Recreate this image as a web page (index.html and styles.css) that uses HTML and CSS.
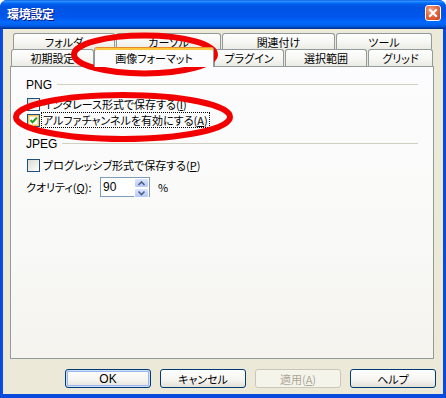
FILE: index.html
```html
<!DOCTYPE html>
<html lang="ja">
<head>
<meta charset="utf-8">
<title>環境設定</title>
<link rel="stylesheet" href="styles.css">
</head>
<body>
<div class="window">
  <div class="titlebar">
    <span class="title">環境設定</span>
    <span class="close">
      <svg viewBox="0 0 16 16" width="16" height="16"><path d="M5 5 L11 11 M11 5 L5 11" stroke="#fff" stroke-width="2.2" stroke-linecap="square" fill="none"/></svg>
    </span>
  </div>
  <div class="client">
    <div class="tabs">
      <div class="tabrow back">
        <div class="tab t-folder">フォルダ</div>
        <div class="tab t-cursor">カーソル</div>
        <div class="tab t-assoc">関連付け</div>
        <div class="tab t-tool">ツール</div>
      </div>
      <div class="tabrow front">
        <div class="tab t-init">初期設定</div>
        <div class="tab t-image selected">画像フォーマット</div>
        <div class="tab t-plugin">プラグイン</div>
        <div class="tab t-select">選択範囲</div>
        <div class="tab t-grid">グリッド</div>
      </div>
    </div>
    <div class="panel">
      <div class="group png">
        <span class="group-label latin">PNG</span>
        <span class="group-line"></span>
      </div>
      <div class="check-row first">
        <span class="box"></span>
        <span class="label">インタレース形式で保存する(<u>I</u>)</span>
      </div>
      <div class="check-row">
        <span class="box hot">
          <svg viewBox="0 0 11 11" width="11" height="11"><path d="M2.5 5 L4.5 7.2 L8.8 2.8" stroke="#21A121" stroke-width="2" fill="none"/></svg>
        </span>
        <span class="label focus">アルファチャンネルを有効にする(<u>A</u>)</span>
      </div>
      <div class="group jpeg">
        <span class="group-label latin">JPEG</span>
        <span class="group-line"></span>
      </div>
      <div class="check-row progressive">
        <span class="box"></span>
        <span class="label">プログレッシブ形式で保存する(<u>P</u>)</span>
      </div>
      <div class="quality-row">
        <span class="quality-label">クオリティ(<u>Q</u>):</span>
        <div class="spin">
          <span class="spin-value latin">90</span>
          <div class="spin-btns">
            <span class="spin-btn">
              <svg viewBox="0 0 13 8" width="13" height="8"><path d="M3.5 6 L6.5 3 L9.5 6" stroke="#4D6185" stroke-width="1.6" fill="none"/></svg>
            </span>
            <span class="spin-btn">
              <svg viewBox="0 0 13 8" width="13" height="8"><path d="M3.5 2.5 L6.5 5.5 L9.5 2.5" stroke="#4D6185" stroke-width="1.6" fill="none"/></svg>
            </span>
          </div>
        </div>
        <span class="pct">%</span>
      </div>
    </div>
    <div class="buttons">
      <span class="btn default latin">OK</span>
      <span class="btn">キャンセル</span>
      <span class="btn disabled">適用(<u>A</u>)</span>
      <span class="btn">ヘルプ</span>
    </div>
  </div>
  <svg class="marks" viewBox="0 0 446 398" width="446" height="398">
    <ellipse cx="144.5" cy="54.5" rx="70.5" ry="19" fill="none" stroke="#F20000" stroke-width="6"/>
    <ellipse cx="123" cy="117" rx="107" ry="22" fill="none" stroke="#F20000" stroke-width="6"/>
  </svg>
</div>
</body>
</html>
```

FILE: styles.css
```css
* { box-sizing: border-box; }

html, body {
  margin: 0;
  padding: 0;
  background: #ffffff;
}

body {
  font-family: "Noto Sans CJK JP", "Noto Sans", sans-serif;
  font-size: 11px;
  font-feature-settings: "palt";
  color: #000;
}

.latin {
  font-family: "Liberation Sans", "DejaVu Sans", sans-serif;
  font-size: 12px;
  font-feature-settings: normal;
}

.window {
  position: relative;
  width: 446px;
  height: 398px;
  display: flex;
  flex-direction: column;
  border-radius: 7px 7px 0 0;
  overflow: hidden;
  background: linear-gradient(to right, #0A3CD6 0, #0C52E6 1px, #0A4BDE 3px);
}

.titlebar {
  flex: none;
  height: 29px;
  display: flex;
  align-items: center;
  justify-content: space-between;
  padding: 0 5px 1px 7px;
  background: linear-gradient(to bottom,
    #0058EE 0%, #3593FF 4%, #288EFF 6%, #127DFF 8%, #036FFC 10%,
    #0262EE 14%, #0057E5 20%, #0054E3 24%, #0055EB 56%, #005BF5 66%,
    #026AFE 76%, #0062EF 86%, #0052D6 92%, #0040AB 96%, #003092 100%);
}

.title {
  color: #fff;
  font-weight: bold;
  font-size: 12px;
  line-height: 16px;
  letter-spacing: -0.3px;
  text-shadow: 1px 1px 0 #0A1883;
}

.close {
  width: 16px;
  height: 16px;
  margin-top: -2px;
  border: 1px solid #fff;
  border-radius: 3px;
  background: radial-gradient(circle at 35% 30%, #F4A88C 0%, #E5683F 45%, #C8401E 100%);
  display: flex;
  align-items: center;
  justify-content: center;
}

.close svg {
  display: block;
  margin: -1px;
}

.client {
  flex: 1;
  margin: 0 3px 4px 3px;
  background: #ECE9D8;
  display: flex;
  flex-direction: column;
  padding: 4px 7px 0 7px;
}

.tabs {
  display: flex;
  flex-direction: column;
}

.tabrow {
  display: flex;
  gap: 1px;
}

.tabrow.back {
  height: 16px;
  padding-left: 3px;
}

.tabrow.front {
  height: 17px;
  padding-left: 1px;
}

.tab {
  height: 100%;
  border: 1px solid #919B9C;
  border-bottom: none;
  border-radius: 3px 3px 0 0;
  background: linear-gradient(to bottom, #FEFEFE 0%, #F7F7F4 50%, #ECEBE5 100%);
  display: flex;
  align-items: center;
  justify-content: center;
  line-height: 14px;
  white-space: nowrap;
}

.t-folder { width: 102px; }
.t-cursor { width: 105px; }
.t-assoc  { width: 113px; }
.t-tool   { width: 96px; }

.t-init   { width: 83px; }
.t-image  { width: 118px; }
.t-plugin { width: 70px; }
.t-select { width: 82px; }
.t-grid   { width: 65px; }

.tab.selected {
  position: relative;
  z-index: 2;
  align-self: flex-start;
  height: 20px;
  margin-top: -2px;
  margin-left: -1px;
  margin-right: -1px;
  width: 120px;
  border-top: 1px solid #E68B2C;
  box-shadow: inset 0 2px 0 #FFC83C;
  background: #FCFCFE;
  padding-top: 1px;
}

.panel {
  height: 293px;
  margin-right: 2px;
  border: 1px solid #919B9C;
  background: linear-gradient(to bottom, #FCFCFE 0%, #F9F9F7 60%, #F4F3EE 100%);
  padding: 11px 15px 0 15px;
  display: flex;
  flex-direction: column;
}

.group {
  height: 14px;
  display: flex;
  align-items: center;
}

.group-label {
  line-height: 14px;
  color: #000;
}

.group-line {
  flex: 1;
  height: 1px;
  margin-left: 5px;
  margin-top: -1px;
  background: #D0D0BF;
}

.group.jpeg {
  margin-top: 9px;
}

.check-row {
  height: 16px;
  display: flex;
  align-items: center;
  padding-left: 1px;
}

.check-row.first {
  margin-top: 4px;
}

.check-row.progressive {
  margin-top: 6px;
}

.box {
  width: 13px;
  height: 13px;
  flex: none;
  border: 1px solid #1C5180;
  background: linear-gradient(135deg, #DCDCD7 0%, #ECECE8 50%, #FFFFFF 100%);
  display: flex;
  align-items: center;
  justify-content: center;
}

.box.hot {
  background: #fff;
  box-shadow: inset 0 0 0 1px #F9C25B, inset 0 0 0 2px #FCE3A6;
}

.box svg { display: block; }

.label {
  margin-left: 1px;
  padding: 0 1px;
  line-height: 14px;
  border: 1px solid transparent;
  white-space: nowrap;
}

.label.focus {
  border: 1px dotted #000;
}

.quality-row {
  margin-top: 4px;
  height: 20px;
  display: flex;
  align-items: center;
}

.quality-label {
  width: 74px;
  line-height: 14px;
  white-space: nowrap;
}

.spin {
  width: 50px;
  height: 20px;
  border: 1px solid #7F9DB9;
  background: #fff;
  display: flex;
  align-items: center;
  justify-content: space-between;
}

.spin-value {
  padding-left: 2px;
  line-height: 14px;
}

.spin-btns {
  width: 15px;
  height: 18px;
  display: flex;
  flex-direction: column;
}

.spin-btn {
  flex: 1;
  border: 1px solid #fff;
  border-radius: 2px;
  background: linear-gradient(to bottom, #DCE6FC 0%, #C4D4F9 60%, #B5C8F4 100%);
  display: flex;
  align-items: center;
  justify-content: center;
}

.spin-btn svg { display: block; }

.pct {
  margin-left: 8px;
  line-height: 14px;
}

.buttons {
  margin-top: 10px;
  height: 19px;
  display: flex;
  justify-content: flex-end;
  gap: 9px;
}

.btn {
  width: 86px;
  height: 19px;
  border: 1px solid #003C74;
  border-radius: 3px;
  background: linear-gradient(to bottom, #FFFFFF 0%, #F5F4F0 60%, #E3E0D6 100%);
  display: flex;
  align-items: center;
  justify-content: center;
  line-height: 14px;
  white-space: nowrap;
}

.btn.default {
  box-shadow: inset 0 0 0 1px #CEDDF8, inset 0 0 0 2px #9DB7EE;
}

.btn.disabled {
  border-color: #C9C7BA;
  background: #F5F4EA;
  color: #ACA899;
}

.marks {
  position: absolute;
  left: 0;
  top: 0;
  pointer-events: none;
}
```
